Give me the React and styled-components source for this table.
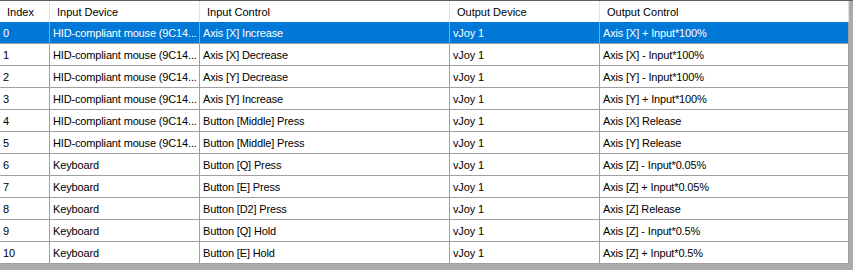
import React from 'react';
import styled, { createGlobalStyle } from 'styled-components';

const GlobalStyle = createGlobalStyle`
  html, body {
    margin: 0;
    padding: 0;
    background: #ababab;
  }
`;

const columns = ['Index', 'Input Device', 'Input Control', 'Output Device', 'Output Control'];

const mouse = 'HID-compliant mouse (9C14...';

const rows = [
  ['0', mouse, 'Axis [X] Increase', 'vJoy 1', 'Axis [X] + Input*100%'],
  ['1', mouse, 'Axis [X] Decrease', 'vJoy 1', 'Axis [X] - Input*100%'],
  ['2', mouse, 'Axis [Y] Decrease', 'vJoy 1', 'Axis [Y] - Input*100%'],
  ['3', mouse, 'Axis [Y] Increase', 'vJoy 1', 'Axis [Y] + Input*100%'],
  ['4', mouse, 'Button [Middle] Press', 'vJoy 1', 'Axis [X] Release'],
  ['5', mouse, 'Button [Middle] Press', 'vJoy 1', 'Axis [Y] Release'],
  ['6', 'Keyboard', 'Button [Q] Press', 'vJoy 1', 'Axis [Z] - Input*0.05%'],
  ['7', 'Keyboard', 'Button [E] Press', 'vJoy 1', 'Axis [Z] + Input*0.05%'],
  ['8', 'Keyboard', 'Button [D2] Press', 'vJoy 1', 'Axis [Z] Release'],
  ['9', 'Keyboard', 'Button [Q] Hold', 'vJoy 1', 'Axis [Z] - Input*0.5%'],
  ['10', 'Keyboard', 'Button [E] Hold', 'vJoy 1', 'Axis [Z] + Input*0.5%'],
];

const Frame = styled.div`
  width: 853px;
  height: 270px;
  box-sizing: border-box;
  border-top: 1px solid #5e5e5e;
  background: #ababab;
  overflow: hidden;
  font-family: "Liberation Sans", Arial, sans-serif;
  font-size: 11px;
`;

const Grid = styled.div`
  display: grid;
  grid-template-columns: 50px 150px 250px 150px 249px;
  width: 849px;
`;

const HeaderCell = styled.div`
  height: 21px;
  box-sizing: border-box;
  padding-left: 7px;
  background: #ffffff;
  color: #000;
  border-right: 1px solid #e3e3e3;
  display: flex;
  align-items: center;
  white-space: nowrap;
  overflow: hidden;
`;

const Cell = styled.div`
  height: 22px;
  box-sizing: border-box;
  padding-left: 3px;
  letter-spacing: -0.15px;
  background: ${p => (p.$selected ? '#0078d7' : '#ffffff')};
  color: ${p => (p.$selected ? '#ffffff' : '#000000')};
  border-right: 1px solid #a0a0a0;
  border-bottom: 1px solid #a0a0a0;
  display: flex;
  align-items: center;
  white-space: nowrap;
  overflow: hidden;
`;

export default function App() {
  return (
    <Frame>
      <GlobalStyle />
      <Grid>
        {columns.map(c => (
          <HeaderCell key={c}>{c}</HeaderCell>
        ))}
        {rows.map((r, i) =>
          r.map((v, j) => (
            <Cell key={i + '-' + j} $selected={i === 0}>
              {v}
            </Cell>
          ))
        )}
      </Grid>
    </Frame>
  );
}
